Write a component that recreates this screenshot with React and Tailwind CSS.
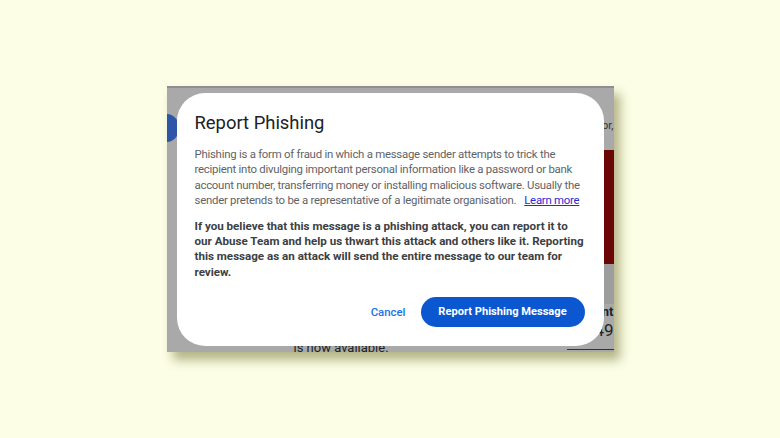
export default function App() {
  return (
    <div className="w-[780px] h-[438px] bg-[#fcfee6] flex items-center justify-center" style={{ fontFamily: 'Roboto, "Liberation Sans", sans-serif' }}>
      <div className="relative w-[447px] h-[266px] bg-[#a9a9a9] border-t-2 border-[#8f8f8f] shadow-[6px_8px_10px_rgba(90,90,20,0.45)] overflow-hidden">
        {/* background content under overlay */}
        <div className="absolute left-[-14px] top-[26px] w-[26px] h-[28px] rounded-full bg-[#2f55a8]" />
        <div className="absolute right-[0px] top-[30px] text-[11px] text-[#333]">or,</div>
        <div className="absolute right-0 top-[62px] w-[14px] h-[114px] bg-[#6b0606]" />
        <div className="absolute right-0 top-[176px] w-[14px] h-[40px] bg-[#9d9d9d]" />
        <div className="absolute right-[0px] top-[214px] text-[13px] font-bold text-[#222]">nt</div>
        <div className="absolute right-[0px] top-[234px] text-[17px] text-[#222] leading-none">49</div>
        <div className="absolute right-0 top-[261px] w-[47px] h-[1px] bg-[#333]" />
        <div className="absolute left-[127px] top-[252px] text-[13px] leading-[16px] text-[#222]">is now available.</div>

        <div className="relative mt-[5px] mx-[10px] h-[253px] bg-white rounded-[28px] pl-[18px] pr-[19px] pt-[18px] flex flex-col">
          <div className="text-[18.4px] leading-[24px] text-[#202124]">Report Phishing</div>
          <p className="mt-[12px] text-[11.4px] tracking-[-0.25px] leading-[15.4px] text-[#5f6368]">
            Phishing is a form of fraud in which a message sender attempts to trick the recipient into divulging important personal information like a password or bank account number, transferring money or installing malicious software. Usually the sender pretends to be a representative of a legitimate organisation.
            <span className="ml-[8px] text-[#2b2bd0] underline">Learn more</span>
          </p>
          <p className="mt-[10px] text-[11.6px] leading-[15.4px] font-bold text-[#3c4043]">
            If you believe that this message is a phishing attack, you can report it to our Abuse Team and help us thwart this attack and others like it. Reporting this message as an attack will send the entire message to our team for review.
          </p>
          <div className="mt-[17px] flex items-center justify-end gap-[15px]">
            <button className="text-[11.4px] font-medium text-[#1a73e8]">Cancel</button>
            <button className="h-[30px] w-[164px] rounded-full bg-[#0b57d0] text-white text-[11.1px] font-bold">Report Phishing Message</button>
          </div>
        </div>
      </div>
    </div>
  );
}
